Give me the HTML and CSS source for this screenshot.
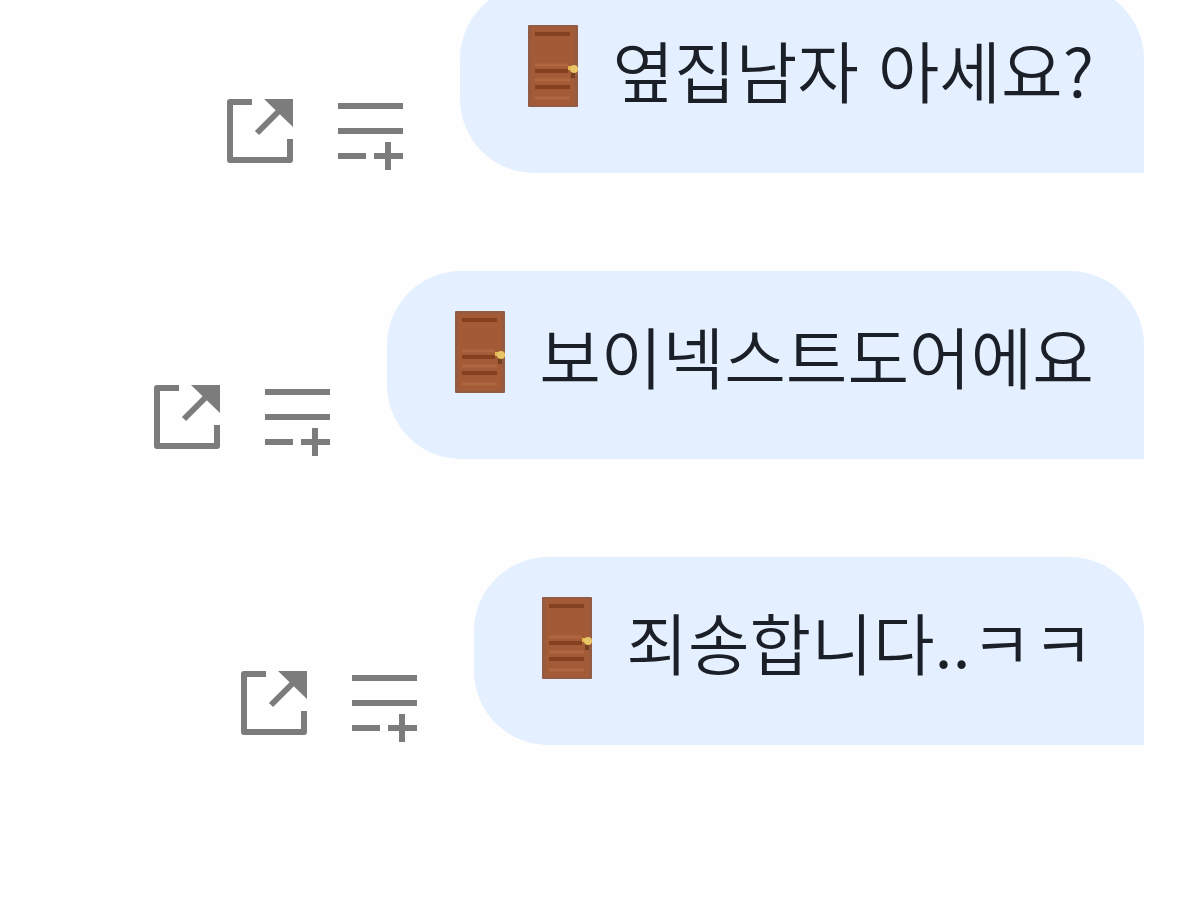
FILE: index.html
```
<!DOCTYPE html>
<html lang="ko">
<head>
    <meta charset="UTF-8">
    <meta name="viewport" content="width=device-width, initial-scale=1.0">
    <title>채팅</title>
    <link rel="stylesheet" href="styles.css">
</head>
<body>
    <!-- 공용 아이콘 -->
    <svg class="symbols" aria-hidden="true">
        <symbol id="icon-share" viewBox="0 0 68 72">
            <path d="M26 4H4v58h60V41" fill="none" stroke="#7c7c7c" stroke-width="6" stroke-linejoin="round"/>
            <path d="M31 35L56 10" fill="none" stroke="#7c7c7c" stroke-width="6"/>
            <path d="M38 1h29v28z" fill="#7c7c7c"/>
        </symbol>
        <symbol id="icon-list-add" viewBox="0 0 68 72">
            <path d="M2 8h65M2 33h65M2 58h28M38 58h29M52 44v28" fill="none" stroke="#7c7c7c" stroke-width="6"/>
        </symbol>
        <symbol id="icon-door" viewBox="0 0 50 82">
            <rect width="50" height="82" rx="1" fill="#945a42"/>
            <rect x="3" y="2" width="44" height="78" fill="#a25b36"/>
            <path d="M7 9h35M7 46h33M7 62h35" stroke="#84401f" stroke-width="4"/>
            <path d="M7 40h33M7 55h35M7 73h35" stroke="#b0663f" stroke-width="3"/>
            <path d="M43 45h4v8h-4z" fill="#75401f"/>
            <path d="M40 43h9" stroke="#e2b84d" stroke-width="4"/>
            <circle cx="46" cy="44" r="4" fill="#e8c565"/>
        </symbol>
    </svg>

    <main class="chat">
        <div class="message">
            <div class="actions">
                <button class="action-button" type="button" aria-label="공유"><svg class="action-icon"><use href="#icon-share"/></svg></button>
                <button class="action-button" type="button" aria-label="목록에 추가"><svg class="action-icon"><use href="#icon-list-add"/></svg></button>
            </div>
            <div class="bubble">
                <svg class="door"><use href="#icon-door"/></svg>
                <p class="text">옆집남자 아세요?</p>
            </div>
        </div>
        <div class="message">
            <div class="actions">
                <button class="action-button" type="button" aria-label="공유"><svg class="action-icon"><use href="#icon-share"/></svg></button>
                <button class="action-button" type="button" aria-label="목록에 추가"><svg class="action-icon"><use href="#icon-list-add"/></svg></button>
            </div>
            <div class="bubble">
                <svg class="door"><use href="#icon-door"/></svg>
                <p class="text">보이넥스트도어에요</p>
            </div>
        </div>
        <div class="message">
            <div class="actions">
                <button class="action-button" type="button" aria-label="공유"><svg class="action-icon"><use href="#icon-share"/></svg></button>
                <button class="action-button" type="button" aria-label="목록에 추가"><svg class="action-icon"><use href="#icon-list-add"/></svg></button>
            </div>
            <div class="bubble">
                <svg class="door"><use href="#icon-door"/></svg>
                <p class="text">죄송합니다..ㅋㅋ</p>
            </div>
        </div>
    </main>
</body>
</html>
```

FILE: styles.css
```
* {
    box-sizing: border-box;
}
body {
    margin: 0;
    background: #fefefe;
    color: #1b2028;
    font-family: "Noto Sans CJK KR", sans-serif;
    font-weight: 350;
}
.symbols {
    display: none;
}
/* 최신 메시지가 아래에 오도록 정렬 */
.chat {
    display: flex;
    flex-direction: column;
    justify-content: flex-end;
    gap: 98px;
    height: 100vh;
    padding: 0 56px 166px;
    overflow: hidden;
}
.message {
    display: flex;
    flex-shrink: 0;
    justify-content: flex-end;
    align-items: flex-end;
    gap: 56px;
}
.actions {
    display: flex;
    gap: 42px;
    padding-bottom: 3px;
}
.action-button {
    display: block;
    padding: 0;
    border: none;
    background: none;
    cursor: pointer;
}
.action-icon {
    display: block;
    width: 68px;
    height: 72px;
}
.bubble {
    display: flex;
    align-items: flex-start;
    gap: 34px;
    padding: 40px 50px 60px 68px;
    border-radius: 74px 74px 0 74px;
    background: #e4f0ff;
}
.door {
    flex-shrink: 0;
    width: 50px;
    height: 82px;
}
.text {
    margin: 0;
    font-size: 67px;
    line-height: 88px;
    white-space: nowrap;
}
```
